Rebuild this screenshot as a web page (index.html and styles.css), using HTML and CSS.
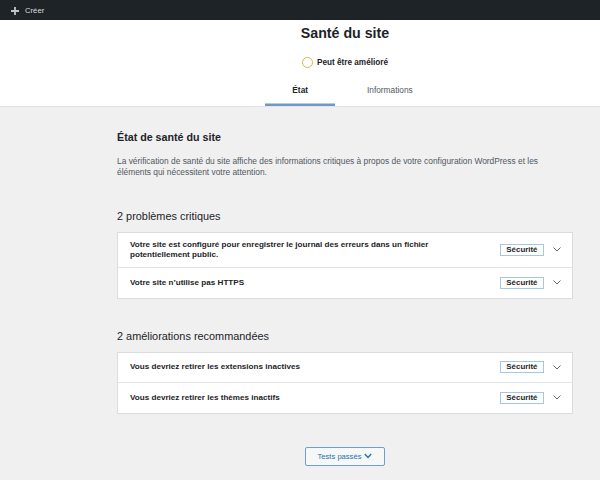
FILE: index.html
```html
<!DOCTYPE html>
<html lang="fr">
<head>
    <meta charset="UTF-8">
    <meta name="viewport" content="width=device-width, initial-scale=1.0">
    <title>Santé du site</title>
    <link rel="stylesheet" href="styles.css">
</head>
<body>
    <div class="adminbar">
        <span class="new-item">
            <svg class="plus" width="8" height="8" viewBox="0 0 8 8"><path d="M4 0v8M0 4h8" stroke="#c3c4c7" stroke-width="1.8"/></svg>
            Créer
        </span>
    </div>

    <div class="health-header">
        <div class="title-section">
            <h1>Santé du site</h1>
            <div class="progress">
                <span class="ring"></span>
                <span class="progress-label">Peut être amélioré</span>
            </div>
        </div>
        <nav class="tabs-wrapper">
            <a class="tab active" href="#">État</a>
            <a class="tab" href="#">Informations</a>
        </nav>
    </div>

    <div class="health-body">
        <h2>État de santé du site</h2>
        <p class="intro">La vérification de santé du site affiche des informations critiques à propos de votre configuration WordPress et les éléments qui nécessitent votre attention.</p>

        <h3>2 problèmes critiques</h3>
        <div class="accordion">
            <div class="row">
                <span class="row-title">Votre site est configuré pour enregistrer le journal des erreurs dans un fichier potentiellement public.</span>
                <span class="badge">Sécurité</span>
                <svg class="chevron" width="8" height="5" viewBox="0 0 8 5"><path d="M0.5 0.5L4 4L7.5 0.5" fill="none" stroke="#646970" stroke-width="1"/></svg>
            </div>
            <div class="row">
                <span class="row-title">Votre site n’utilise pas HTTPS</span>
                <span class="badge">Sécurité</span>
                <svg class="chevron" width="8" height="5" viewBox="0 0 8 5"><path d="M0.5 0.5L4 4L7.5 0.5" fill="none" stroke="#646970" stroke-width="1"/></svg>
            </div>
        </div>

        <h3>2 améliorations recommandées</h3>
        <div class="accordion">
            <div class="row">
                <span class="row-title">Vous devriez retirer les extensions inactives</span>
                <span class="badge">Sécurité</span>
                <svg class="chevron" width="8" height="5" viewBox="0 0 8 5"><path d="M0.5 0.5L4 4L7.5 0.5" fill="none" stroke="#646970" stroke-width="1"/></svg>
            </div>
            <div class="row">
                <span class="row-title">Vous devriez retirer les thèmes inactifs</span>
                <span class="badge">Sécurité</span>
                <svg class="chevron" width="8" height="5" viewBox="0 0 8 5"><path d="M0.5 0.5L4 4L7.5 0.5" fill="none" stroke="#646970" stroke-width="1"/></svg>
            </div>
        </div>

        <div class="passed">
            <button class="button">Tests passés
                <svg width="8" height="6" viewBox="0 0 8 6"><path d="M0.8 1L4 4.4L7.2 1" fill="none" stroke="#2271b1" stroke-width="1.4"/></svg>
            </button>
        </div>
    </div>
</body>
</html>
```

FILE: styles.css
```css
* {
    box-sizing: border-box;
}
body {
    margin: 0;
    font-family: "Liberation Sans", Arial, sans-serif;
    font-size: 7.7px;
    color: #1d2327;
    background-color: #f0f0f1;
}
.adminbar {
    height: 20px;
    background-color: #1d2327;
    display: flex;
    align-items: center;
    padding: 1px 0 0 11px;
}
.new-item {
    display: flex;
    align-items: center;
    gap: 6px;
    color: #dcdcde;
    font-size: 7.7px;
}
.health-header {
    background-color: white;
    border-bottom: 1px solid #e4e4e6;
    padding-left: 90px;
    text-align: center;
}
.title-section {
    padding-top: 4px;
}
h1 {
    margin: 0;
    font-size: 14.2px;
    line-height: 19.5px;
    font-weight: bold;
}
.progress {
    display: flex;
    justify-content: center;
    align-items: center;
    gap: 4px;
    margin-top: 12.5px;
    height: 12px;
}
.ring {
    width: 11px;
    height: 11px;
    border: 1.3px solid #d9b64a;
    border-radius: 50%;
}
.progress-label {
    font-weight: bold;
    font-size: 8.2px;
}
.tabs-wrapper {
    display: inline-grid;
    grid-template-columns: 1fr 1fr;
    margin-top: 10.5px;
}
.tab {
    display: block;
    margin: 0 10px;
    padding: 5px 12px 10px;
    line-height: 12px;
    font-size: 8.3px;
    color: #50575e;
    text-decoration: none;
}
.tab.active {
    color: #1d2327;
    font-weight: bold;
    box-shadow: inset 0 -2.5px #6d9ac4;
}
.health-body {
    padding: 23px 27px 0 117px;
}
h2 {
    margin: 0;
    font-size: 10.7px;
    line-height: 15px;
}
.intro {
    margin: 11px 0 0;
    padding-right: 8px;
    font-size: 8.4px;
    line-height: 11.7px;
    color: #50575e;
}
h3 {
    margin: 30px 0 8px;
    font-size: 10.9px;
    line-height: 15px;
    font-weight: normal;
}
.accordion {
    background-color: white;
    border: 1px solid #dcdcde;
}
.row {
    display: flex;
    align-items: center;
    min-height: 30px;
    padding: 7px 11px 7px 12px;
    border-bottom: 1px solid #e4e4e6;
}
.row:last-child {
    border-bottom: none;
}
.row-title {
    flex: 1;
    padding-right: 40px;
    font-weight: bold;
    font-size: 8.1px;
    line-height: 10px;
}
.badge {
    border: 1px solid #a5c7e6;
    padding: 0 5.5px;
    line-height: 10px;
    font-weight: bold;
    font-size: 7.9px;
}
.chevron {
    margin-left: 9px;
}
.passed {
    text-align: center;
    margin-top: 33px;
}
.button {
    display: inline-flex;
    align-items: center;
    gap: 3px;
    height: 19px;
    padding: 0 12px;
    font-family: inherit;
    font-size: 7.6px;
    color: #2271b1;
    background-color: #f6f7f7;
    border: 1px solid #6f9fcf;
    border-radius: 2px;
}
```
